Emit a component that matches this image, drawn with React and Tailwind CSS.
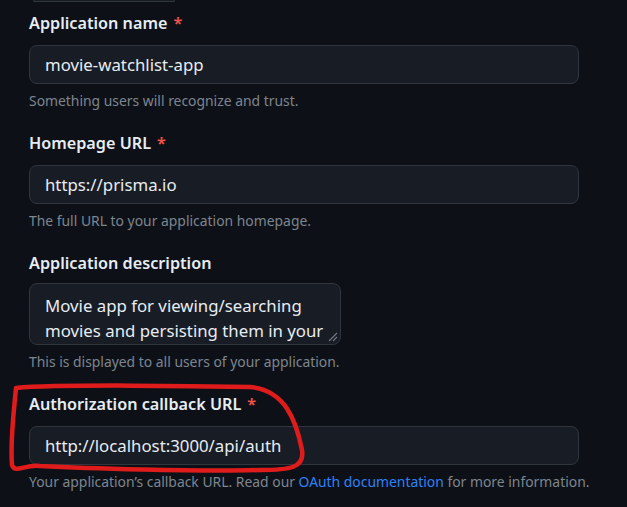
import React from "react";

const Label = ({ children, required }) => (
  <div className="text-[16.2px] font-semibold text-[#e6edf3] leading-[22px]">
    {children}
    {required && <span className="text-[#f85149] ml-[6px]">*</span>}
  </div>
);

const Input = ({ value }) => (
  <div className="mt-[11px] w-[550px] h-[39px] flex items-center px-[15px] rounded-[8px] border border-[#30363d] bg-[#181c24] text-[16.8px] text-[#e6edf3]">
    {value}
  </div>
);

const Hint = ({ children }) => (
  <div className="mt-[9px] text-[13.9px] leading-[16px] text-[#7d8590]">{children}</div>
);

const ResizeGrip = () => (
  <svg className="absolute right-[2px] bottom-[2px]" width="12" height="12" viewBox="0 0 12 12">
    <path d="M11 3 L3 11 M11 7 L7 11" stroke="#6e7681" strokeWidth="1.2" />
  </svg>
);

export default function App() {
  return (
    <div
      className="relative w-[627px] h-[507px] overflow-hidden bg-[#0d1117]"
      style={{ fontFamily: '"Segoe UI", "Noto Sans", sans-serif' }}
    >
      <div className="ml-[33px] w-[142px] h-[2px] rounded-b-[6px] border-b border-x border-[#30363d] bg-[#161b22]" />

      <div className="pl-[29px] pt-[10px]">
        <Label required>Application name</Label>
        <Input value="movie-watchlist-app" />
        <Hint>Something users will recognize and trust.</Hint>

        <div className="mt-[23px]">
          <Label required>Homepage URL</Label>
          <Input value="https://prisma.io" />
          <Hint>The full URL to your application homepage.</Hint>
        </div>

        <div className="mt-[23px]">
          <Label>Application description</Label>
          <div className="relative mt-[9px] w-[312px] h-[62px] overflow-hidden rounded-[8px] border border-[#30363d] bg-[#181c24] px-[15px] pt-[9px] text-[16.8px] leading-[25px] text-[#e6edf3]">
            <div>Movie app for viewing/searching</div>
            <div>movies and persisting them in your</div>
            <ResizeGrip />
          </div>
          <Hint>This is displayed to all users of your application.</Hint>
        </div>

        <div className="mt-[23px]">
          <Label required>Authorization callback URL</Label>
          <Input value="http://localhost:3000/api/auth" />
          <Hint>
            Your application’s callback URL. Read our{" "}
            <span className="text-[#2f81f7]">OAuth documentation</span> for more information.
          </Hint>
        </div>
      </div>

      <svg className="absolute left-0 top-0 pointer-events-none" width="627" height="507">
        <path
          d="M 16 388 C 60 384, 200 386, 250 387 C 285 390, 296 420, 302 450 C 305 468, 290 470, 260 470 C 200 472, 80 468, 40 466 C 25 464, 15 474, 12 465 C 10 440, 14 410, 16 388 Z"
          fill="none"
          stroke="#e01b1b"
          strokeWidth="4.5"
          strokeLinejoin="round"
        />
      </svg>
    </div>
  );
}
